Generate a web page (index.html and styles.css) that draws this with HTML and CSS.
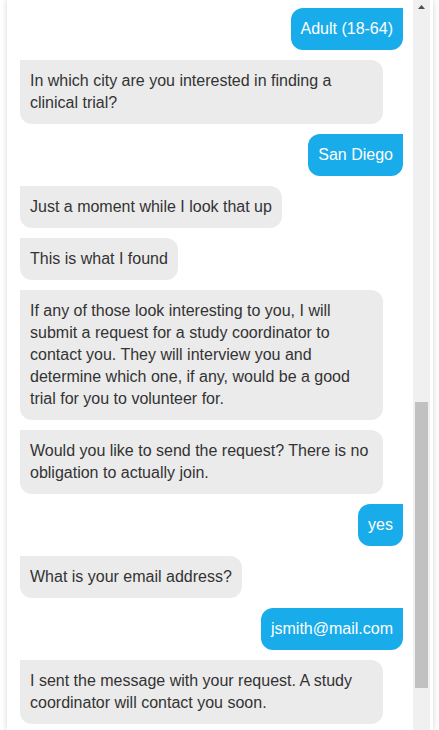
FILE: index.html
```html
<!DOCTYPE html>
<html lang="en">
<head>
<meta charset="utf-8">
<title>Clinical trial chat</title>
<link rel="stylesheet" href="styles.css">
</head>
<body>
<div class="card">
  <div class="chat">
    <div class="msg user">Adult (18-64)</div>
    <div class="msg bot">In which city are you interested in finding a clinical trial?</div>
    <div class="msg user">San Diego</div>
    <div class="msg bot">Just a moment while I look that up</div>
    <div class="msg bot">This is what I found</div>
    <div class="msg bot">If any of those look interesting to you, I will submit a request for a study coordinator to contact you. They will interview you and determine which one, if any, would be a good trial for you to volunteer for.</div>
    <div class="msg bot">Would you like to send the request? There is no obligation to actually join.</div>
    <div class="msg user">yes</div>
    <div class="msg bot">What is your email address?</div>
    <div class="msg user">jsmith@mail.com</div>
    <div class="msg bot">I sent the message with your request. A study coordinator will contact you soon.</div>
  </div>
  <div class="scrollbar">
    <div class="arrow"><svg width="7" height="4" viewBox="0 0 7 4"><polygon points="0,4 3.5,0 7,4" fill="#505050"/></svg></div>
    <div class="thumb"></div>
  </div>
</div>
</body>
</html>
```

FILE: styles.css
```css
html, body {
  margin: 0;
  padding: 0;
  background: #ffffff;
  height: 730px;
  overflow: hidden;
}

body {
  font-family: "Liberation Sans", Arial, sans-serif;
  font-size: 16px;
}

.card {
  margin-left: 7px;
  width: 426px;
  height: 730px;
  background: #ffffff;
  box-shadow: 0 0 6px rgba(0, 0, 0, 0.18);
  display: flex;
  box-sizing: border-box;
  padding-right: 3px;
}

.chat {
  flex: 1;
  display: flex;
  flex-direction: column;
  gap: 10px;
  padding: 8px 10px 6px 13px;
  overflow: hidden;
}

.msg {
  line-height: 22px;
  padding: 10px;
  max-width: 363px;
  box-sizing: border-box;
}

.bot {
  align-self: flex-start;
  background: #ebebeb;
  color: #333333;
  border-radius: 0 12px 12px 12px;
}

.user {
  align-self: flex-end;
  background: #19acea;
  color: #ffffff;
  border-radius: 12px 0 12px 12px;
}

.scrollbar {
  width: 17px;
  background: #f0f0f0;
  display: flex;
  flex-direction: column;
  align-items: center;
}

.arrow {
  height: 17px;
  display: flex;
  align-items: center;
  justify-content: center;
  width: 17px;
}

.arrow svg {
  display: block;
  margin-top: -4px;
}

.thumb {
  margin-top: 385px;
  width: 13px;
  height: 286px;
  background: #c1c1c1;
}
```
